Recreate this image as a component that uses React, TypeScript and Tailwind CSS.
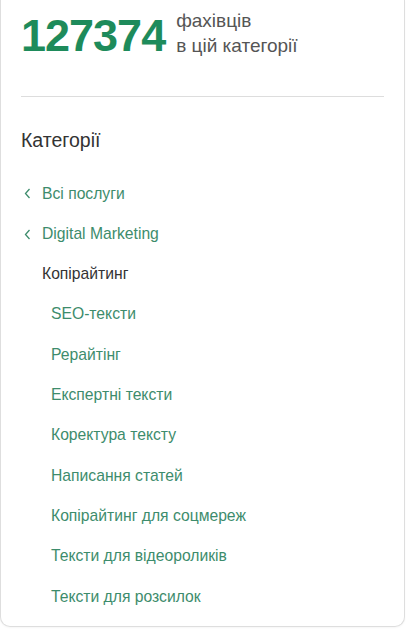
import React from 'react';

const subcategories = [
  'SEO-тексти',
  'Рерайтінг',
  'Експертні тексти',
  'Коректура тексту',
  'Написання статей',
  'Копірайтинг для соцмереж',
  'Тексти для відеороликів',
  'Тексти для розсилок',
];

const parents = ['Всі послуги', 'Digital Marketing'];

function ChevronLeft() {
  return (
    <svg width="7" height="11" viewBox="0 0 7 11" fill="none" className="shrink-0">
      <polyline points="5.5,1 1.5,5.5 5.5,10" stroke="#3d8c6c" strokeWidth="1.3" />
    </svg>
  );
}

export default function App() {
  return (
    <div className="min-h-screen bg-white" style={{ fontFamily: '"Liberation Sans", Arial, sans-serif' }}>
      <aside className="w-[405px] border border-t-0 border-[#dedede] rounded-b-[10px] bg-white shadow-[0_1px_2px_rgba(0,0,0,0.04)]">
        {/* Specialist counter */}
        <div className="flex items-start pt-[8px] px-5">
          <span className="mt-[5px] text-[45px] leading-none font-bold tracking-[-1px] text-[#1e8b5b]">
            127374
          </span>
          <div className="ml-[11px] text-[19px] leading-[25px] text-[#555]">
            <div>фахівців</div>
            <div>в цій категорії</div>
          </div>
        </div>

        <div className="mx-5 mt-[38px] border-t border-[#dddddd]" />

        {/* Category tree */}
        <div className="px-5 pb-[9px]">
          <h3 className="mt-[31px] text-[19.5px] leading-[24px] text-[#333]">Категорії</h3>
          <ul className="mt-[21.6px] text-[15.7px] leading-[40.3px]">
            {parents.map((p) => (
              <li key={p} className="flex items-center">
                <span className="w-[21px] pl-[3px] flex">
                  <ChevronLeft />
                </span>
                <a href="#" className="text-[#3d8c6c]">{p}</a>
              </li>
            ))}
            <li className="pl-[21px] text-[#333]">Копірайтинг</li>
            {subcategories.map((s) => (
              <li key={s} className="pl-[30px]">
                <a href="#" className="text-[#3d8c6c]">{s}</a>
              </li>
            ))}
          </ul>
        </div>
      </aside>
    </div>
  );
}
